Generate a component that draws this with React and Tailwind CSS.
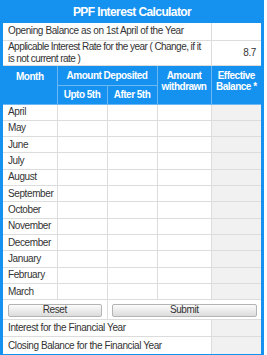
const months = [
  "April",
  "May",
  "June",
  "July",
  "August",
  "September",
  "October",
  "November",
  "December",
  "January",
  "February",
  "March",
];

const cell = "border border-[#dcdcdc] p-0";
const head =
  "border border-[#6db8f3] bg-[#1592f0] text-white font-bold text-[10px] leading-[11px] tracking-[-0.5px] text-center p-0";
const btn =
  "w-full h-[13px] rounded-[2px] border border-[#b4b4b4] bg-gradient-to-b from-[#fbfbfb] to-[#dcdcdc] text-[10px] leading-[10px] tracking-[-0.4px] text-[#333]";

export default function App() {
  return (
    <div className="w-[267px] h-[355px] bg-white font-['Liberation_Sans',Arial,sans-serif] text-[#333] text-[10px] tracking-[-0.4px]">
      <div className="w-[264px] border-x-[3px] border-b-[3px] border-[#1592f0]">
        {/* Title */}
        <div className="h-[23px] bg-[#1592f0] text-white font-bold text-[12px] tracking-[-0.6px] flex items-center justify-center">
          PPF Interest Calculator
        </div>

        <table className="w-[258px] table-fixed border-collapse">
          <colgroup>
            <col className="w-[54px]" />
            <col className="w-[50px]" />
            <col className="w-[50px]" />
            <col className="w-[54px]" />
            <col className="w-[50px]" />
          </colgroup>
          <tbody>
            <tr className="h-[17px]">
              <td colSpan={4} className={`${cell} border-t-0 border-l-0 px-[5px] leading-[12px]`}>
                Opening Balance as on 1st April of the Year
              </td>
              <td className={`${cell} border-t-0 border-r-0`}></td>
            </tr>
            <tr className="h-[25px]">
              <td colSpan={4} className={`${cell} border-l-0 pl-[5px] pr-[2px] leading-[12px] tracking-[-0.55px] align-middle`}>
                Applicable Interest Rate for the year ( Change, if it is not current rate )
              </td>
              <td className={`${cell} border-r-0 text-right pr-[5px]`}>8.7</td>
            </tr>

            {/* Header */}
            <tr className="h-[20px]">
              <th rowSpan={2} className={`${head} border-l-0 align-top pt-[5px]`}>
                Month
              </th>
              <th colSpan={2} className={head}>
                Amount Deposited
              </th>
              <th rowSpan={2} className={`${head} align-top pt-[4px]`}>
                Amount withdrawn
              </th>
              <th rowSpan={2} className={`${head} border-r-0 align-top pt-[4px]`}>
                Effective Balance *
              </th>
            </tr>
            <tr className="h-[19px]">
              <th className={head}>Upto 5th</th>
              <th className={head}>After 5th</th>
            </tr>

            {months.map((m) => (
              <tr key={m} className="h-[16.33px]">
                <td className={`${cell} border-l-0 px-[5px] leading-[12px]`}>{m}</td>
                <td className={cell}></td>
                <td className={cell}></td>
                <td className={cell}></td>
                <td className={`${cell} border-r-0 bg-[#f2f1f1]`}></td>
              </tr>
            ))}

            {/* Buttons */}
            <tr className="h-[17px]">
              <td colSpan={2} className={`${cell} border-l-0 px-[5px] py-[2px]`}>
                <button className={btn}>Reset</button>
              </td>
              <td colSpan={3} className={`${cell} border-r-0 px-[4px] py-[2px]`}>
                <button className={btn}>Submit</button>
              </td>
            </tr>

            <tr className="h-[17px]">
              <td colSpan={4} className={`${cell} border-l-0 px-[5px] leading-[12px]`}>
                Interest for the Financial Year
              </td>
              <td className={`${cell} border-r-0 bg-[#f2f1f1]`}></td>
            </tr>
            <tr className="h-[17px]">
              <td colSpan={4} className={`${cell} border-l-0 border-b-0 px-[5px] leading-[12px]`}>
                Closing Balance for the Financial Year
              </td>
              <td className={`${cell} border-r-0 border-b-0 bg-[#f2f1f1]`}></td>
            </tr>
          </tbody>
        </table>
      </div>
    </div>
  );
}
